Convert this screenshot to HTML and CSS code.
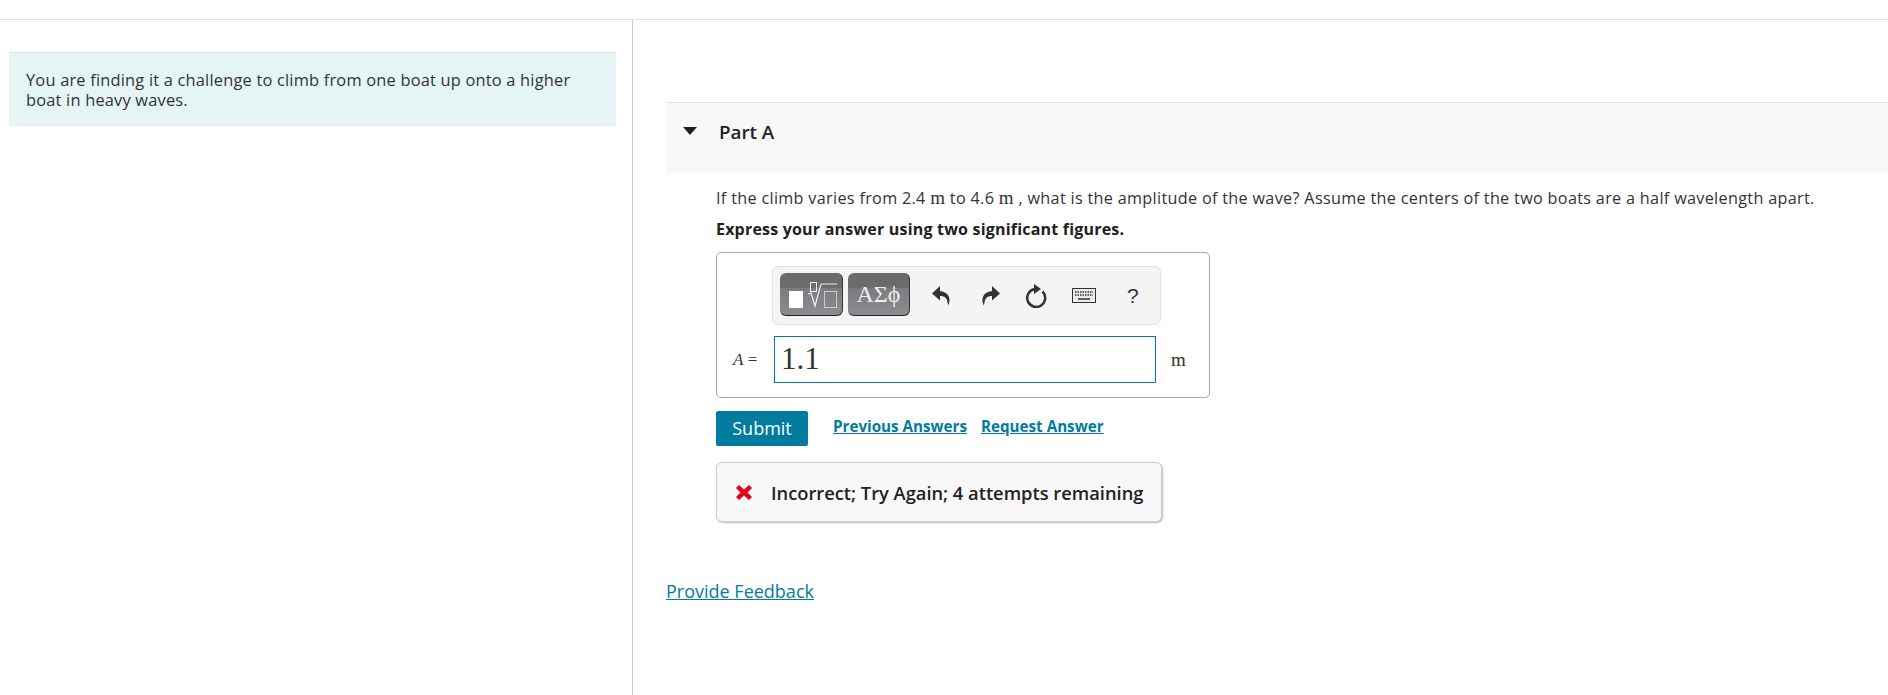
FILE: index.html
```html
<!DOCTYPE html>
<html lang="en">
<head>
    <meta charset="UTF-8">
    <title>Part A</title>
    <link rel="stylesheet" href="styles.css">
</head>
<body>
    <div class="top-bar"></div>
    <div class="columns">
        <div class="left-col">
            <div class="intro">You are finding it a challenge to climb from one boat up onto a higher boat in heavy waves.</div>
        </div>
        <div class="right-col">
            <div class="part-head">
                <span class="caret"></span>
                <h2>Part A</h2>
            </div>
            <div class="part-body">
                <p class="question">If the climb varies from 2.4 <span class="unit">m</span> to 4.6 <span class="unit">m</span> , what is the amplitude of the wave? Assume the centers of the two boats are a half wavelength apart.</p>
                <p class="instruct">Express your answer using two significant figures.</p>
                <div class="answer-box">
                    <div class="toolbar">
                        <button class="tpl-btn tpl-math">
                            <svg width="63" height="43" viewBox="0 0 63 43">
                                <rect x="9" y="18" width="14" height="17" fill="#fff"/>
                                <rect x="30.500" y="9.500" width="6" height="9" fill="none" stroke="#eee"/>
                                <path d="M28 21l3-1 4 13 6-22h16" fill="none" stroke="#eee" stroke-width="1.200"/>
                                <rect x="44.500" y="18.500" width="12" height="16" fill="none" stroke="#ccc"/>
                            </svg>
                        </button>
                        <button class="tpl-btn tpl-greek">ΑΣϕ</button>
                        <span class="tool-icon tool-first">
                            <svg width="20" height="22" viewBox="0 0 20 22"><path d="M8 1L0 8.500l8 7v-4.500c4.500 0 7 2 7.500 6.500l.8 3c2.700-6.500 1.500-13-8.300-14.500z" fill="#333"/></svg>
                        </span>
                        <span class="tool-icon tool-redo">
                            <svg width="20" height="22" viewBox="0 0 20 22"><path d="M12 1l8 7.500-8 7v-4.500c-4.500 0-7 2-7.500 6.500l-.8 3c-2.700-6.500-1.500-13 8.300-14.500z" fill="#333"/></svg>
                        </span>
                        <span class="tool-icon tool-reset">
                            <svg width="22" height="25" viewBox="0 0 22 25"><path d="M10 6A9 9 0 1 0 17.500 8.500" fill="none" stroke="#333" stroke-width="2.500"/><path d="M9 1l7 5-7 5z" fill="#333"/></svg>
                        </span>
                        <span class="tool-icon tool-keys">
                            <svg width="24" height="15" viewBox="0 0 24 15"><rect x=".5" y=".5" width="23" height="14" fill="#ececec" stroke="#333"/><path d="M3 4h18M3 7h18" stroke="#333" stroke-width="1.500" stroke-dasharray="1.500 1"/><path d="M6 11h12" stroke="#333" stroke-width="1.500"/></svg>
                        </span>
                        <span class="tool-help">?</span>
                    </div>
                    <div class="input-row">
                        <span class="var-label"><i>A</i> =</span>
                        <div class="math-input">1.1</div>
                        <span class="input-unit">m</span>
                    </div>
                </div>
                <div class="actions">
                    <button class="submit">Submit</button>
                    <a class="act-link prev-link" href="#">Previous Answers</a>
                    <a class="act-link" href="#">Request Answer</a>
                </div>
                <div class="feedback">
                    <svg class="x-icon" width="18" height="17" viewBox="0 0 18 17"><path d="M1 4l3-3 5 4.500L14 1l3 3-4.500 4.500L17 13l-3 3-5-4.500L4 16l-3-3 4.500-4.500z" fill="#e2001a"/></svg>
                    <span>Incorrect; Try Again; 4 attempts remaining</span>
                </div>
            </div>
            <a class="provide" href="#">Provide Feedback</a>
        </div>
    </div>
</body>
</html>
```

FILE: styles.css
```css
html, body {
    height: 100%;
}
body {
    margin: 0;
    font-family: "Open Sans", sans-serif;
    font-size: 16px;
    color: #212121;
    background-color: #fff;
    overflow: hidden;
}
.top-bar {
    height: 19px;
    border-bottom: 1px solid #e0e0e0;
}
.columns {
    display: flex;
    height: 675px;
}
.left-col {
    width: 633px;
    box-sizing: border-box;
    border-right: 1px solid #c3ccd4;
    padding: 32px 16px 0 9px;
    flex-shrink: 0;
}
.intro {
    background-color: #e5f5f6;
    border-top: 1px solid #dde3e3;
    padding: 17px 30px 17px 17px;
    line-height: 20px;
    font-size: 16.400px;
    letter-spacing: 0.2px;
    color: #333;
    height: 39px;
}
.right-col {
    flex: 1;
    padding: 82px 0 0 33px;
}
.part-head {
    display: flex;
    align-items: center;
    height: 71px;
    background-color: #f8f8f8;
    border-top: 1px solid #e4e4e4;
    padding-left: 17px;
    padding-bottom: 12px;
    box-sizing: border-box;
}
.caret {
    width: 0;
    height: 0;
    border-left: 7px solid transparent;
    border-right: 7px solid transparent;
    border-top: 8px solid #212121;
    margin-right: 22px;
    margin-bottom: 2px;
}
.part-head h2 {
    margin: 0;
    font-size: 18.800px;
    font-weight: 600;
}
.part-body {
    padding: 12px 0 0 50px;
}
.question {
    margin: 0;
    line-height: 26px;
    font-size: 16.200px;
    letter-spacing: 0.32px;
    color: #333;
    white-space: nowrap;
}
.unit {
    font-family: "Liberation Serif", serif;
    font-size: 19px;
}
.instruct {
    margin: 5px 0 0;
    line-height: 26px;
    font-weight: 700;
    font-size: 16px;
    letter-spacing: 0.2px;
}
.answer-box {
    width: 494px;
    height: 146px;
    box-sizing: border-box;
    margin-top: 10px;
    border: 1px solid #aaa;
    border-radius: 5px;
    padding: 13px 16px 0 16px;
}
.toolbar {
    display: flex;
    align-items: center;
    width: 389px;
    height: 59px;
    box-sizing: border-box;
    margin-left: 39px;
    padding: 0 7px;
    background-color: #f4f4f4;
    border: 1px solid #e2e2e2;
    border-radius: 6px;
}
.tpl-btn {
    height: 43px;
    padding: 0;
    margin: 0;
    border: none;
    border-bottom: 1px solid #222;
    border-right: 1px solid #333;
    border-radius: 6px;
    background: linear-gradient(#6b6b6b 0, #6b6b6b 34%, #7b7b80 36%, #8c8c90 100%);
    color: #eee;
    margin-bottom: 2px;
}
.tpl-math {
    width: 63px;
    margin-right: 5px;
    overflow: hidden;
}
.tpl-math svg {
    display: block;
}
.tpl-greek {
    width: 62px;
    font-family: "Liberation Serif", serif;
    font-size: 24px;
}
.tool-icon {
    display: flex;
    align-items: center;
    justify-content: center;
}
.tool-first {
    margin-left: 22px;
}
.tool-redo {
    margin-left: 28px;
}
.tool-reset {
    margin-left: 25px;
}
.tool-keys {
    margin-left: 25px;
}
.tool-help {
    margin-left: 31px;
    font-family: "Liberation Sans", sans-serif;
    font-size: 21px;
    color: #333;
}
.input-row {
    display: flex;
    align-items: center;
    margin-top: 11px;
}
.var-label {
    width: 41px;
    font-family: "Liberation Serif", serif;
    font-size: 17px;
    color: #333;
    white-space: nowrap;
}
.math-input {
    width: 382px;
    height: 47px;
    box-sizing: border-box;
    border: 1px solid #007c9e;
    padding-left: 6px;
    font-family: "Liberation Serif", serif;
    font-size: 31px;
    line-height: 44px;
    color: #333;
}
.input-unit {
    margin-left: 15px;
    font-family: "Liberation Serif", serif;
    font-size: 19px;
    color: #333;
}
.actions {
    display: flex;
    align-items: flex-start;
    margin-top: 13px;
}
.submit {
    width: 92px;
    height: 35px;
    border: none;
    border-radius: 2px;
    background-color: #007c9e;
    color: #fff;
    font-family: "Open Sans", sans-serif;
    font-size: 18px;
    padding: 0 0 2px;
}
.act-link {
    color: #007c9e;
    font-weight: 700;
    font-size: 15.200px;
    line-height: 30px;
}
.prev-link {
    margin-left: 25px;
    margin-right: 14px;
}
.feedback {
    display: flex;
    align-items: center;
    width: 446px;
    height: 60px;
    box-sizing: border-box;
    margin-top: 16px;
    padding-left: 18px;
    background-color: #f8f8f8;
    border: 1px solid #ccc;
    border-radius: 6px;
    box-shadow: 1px 1px 2px #bbb;
    font-size: 18.300px;
    font-weight: 600;
    white-space: nowrap;
}
.x-icon {
    margin-right: 18px;
}
.provide {
    display: inline-block;
    margin-top: 57px;
    color: #007c9e;
    font-size: 18px;
}
```
